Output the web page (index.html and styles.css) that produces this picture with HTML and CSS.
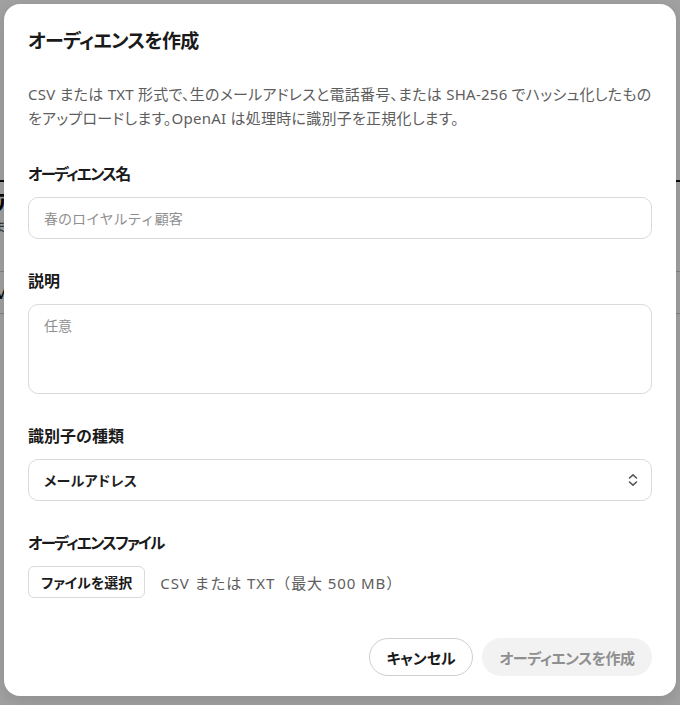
FILE: index.html
```html
<!DOCTYPE html>
<html lang="ja">
<head>
<meta charset="utf-8">
<title>オーディエンスを作成</title>
<link rel="stylesheet" href="styles.css">
</head>
<body>
<div class="page">
  <div class="page-head">ア</div>
  <div class="page-sub">ま</div>
  <div class="page-num">1</div>
  <div class="page-row">M</div>
</div>
<div class="overlay"></div>
<div class="modal" role="dialog">
  <h1 class="title">オーディエンスを作成</h1>
  <p class="desc">CSV または TXT 形式で、生のメールアドレスと電話番号、または SHA-256 でハッシュ化したものをアップロードします。OpenAI は処理時に識別子を正規化します。</p>
  <div class="fields">
    <div class="field">
      <label class="label"><span class="kn">オーディエンス</span>名</label>
      <div class="input"><span class="ph">春のロイヤルティ顧客</span></div>
    </div>
    <div class="field">
      <label class="label">説明</label>
      <div class="input textarea"><span class="ph">任意</span></div>
    </div>
    <div class="field">
      <label class="label">識別子の種類</label>
      <div class="input select"><span class="val">メールアドレス</span>
        <svg class="chev" width="12" height="14" viewBox="0 0 12 14" fill="none" stroke="#555" stroke-width="1.6" stroke-linecap="round" stroke-linejoin="round"><path d="M2.5 5 6 1.8 9.5 5"/><path d="M2.5 9 6 12.2 9.5 9"/></svg>
      </div>
    </div>
    <div class="field">
      <label class="label"><span class="kn">オーディエンスファイル</span></label>
      <div class="file-row"><span class="file-btn">ファイルを選択</span><span class="hint">CSV または TXT（最大 500 MB）</span></div>
    </div>
  </div>
  <div class="footer">
    <button class="btn cancel">キャンセル</button>
    <button class="btn create">オーディエンスを作成</button>
  </div>
</div>
</body>
</html>
```
FILE: styles.css
```css
html, body { margin: 0; padding: 0; }
body {
  width: 680px; height: 705px; overflow: hidden; position: relative;
  background: #fff;
  font-family: "Noto Sans", "Noto Sans CJK JP", sans-serif;
}
.page { padding: 180px 0 0 0; margin-left: -8px; color: #111; }
.page-head { font-size: 22px; font-weight: 700; border-top: 2px solid #111; padding-top: 2px; height: 26px; }
.page-sub { font-size: 14px; color: #555; margin-top: 6px; }
.page-num { font-size: 14px; color: #555; margin-top: 2px; padding-bottom: 14px; border-bottom: 1px solid #ccc; }
.page-row { font-size: 20px; padding: 6px 0 8px; border-bottom: 1px solid #ccc; }
.overlay { position: absolute; inset: 0; background: rgba(0,0,0,0.37); }
.modal {
  position: absolute; left: 4px; top: 4px; width: 672px; height: 692px;
  box-sizing: border-box; background: #fff; border-radius: 16px;
  padding: 23px 24px 20px; display: flex; flex-direction: column;
  box-shadow: 0 4px 16px rgba(0,0,0,0.12);
}
.title {
  margin: 0; font-size: 19px; line-height: 28px; font-weight: 700; color: #1a1a1a;
  font-feature-settings: "palt"; letter-spacing: -0.7px;
}
.desc {
  margin: 27px 0 0; font-size: 15px; line-height: 24px; color: #5d5d5d;
  font-feature-settings: "palt"; letter-spacing: 0.25px;
}
.fields { display: flex; flex-direction: column; gap: 31px; margin-top: 33px; }
.field { display: flex; flex-direction: column; gap: 12px; }
.label { font-size: 16px; line-height: 22px; font-weight: 700; color: #1a1a1a; }
.kn { font-size: 15.5px; font-feature-settings: "palt"; letter-spacing: -1.7px; }
.input {
  box-sizing: border-box; height: 42px; border: 1px solid #dadada; border-radius: 10px;
  padding: 0 15px; display: flex; align-items: center; font-size: 14px;
}
.textarea { height: 90px; align-items: flex-start; padding-top: 10px; }
.ph { color: #8f8f8f; }
.select { justify-content: space-between; padding-right: 12px; }
.val { color: #1f1f1f; font-weight: 700; font-size: 14px; font-feature-settings: "palt"; letter-spacing: 0.3px; }
.file-row { display: flex; align-items: center; gap: 15px; }
.file-btn {
  box-sizing: border-box; height: 32px; border: 1px solid #dadada; border-radius: 6px;
  padding: 0 12px; display: flex; align-items: center; font-size: 14px; font-weight: 700; color: #1a1a1a;
  font-feature-settings: "palt";
}
.hint { font-size: 15px; color: #5d5d5d; letter-spacing: 0.9px; }
.footer { margin-top: auto; display: flex; justify-content: flex-end; gap: 9px; }
.btn {
  height: 38px; border-radius: 999px; font-family: inherit; font-size: 15px; font-weight: 700;
  padding: 0; white-space: nowrap; font-feature-settings: "palt";
}
.cancel { border: 1px solid #cfcfcf; background: #fff; color: #1a1a1a; width: 104px; }
.create { border: none; background: #f2f2f2; color: #8f8f8f; width: 170px; letter-spacing: -0.5px; }
```
